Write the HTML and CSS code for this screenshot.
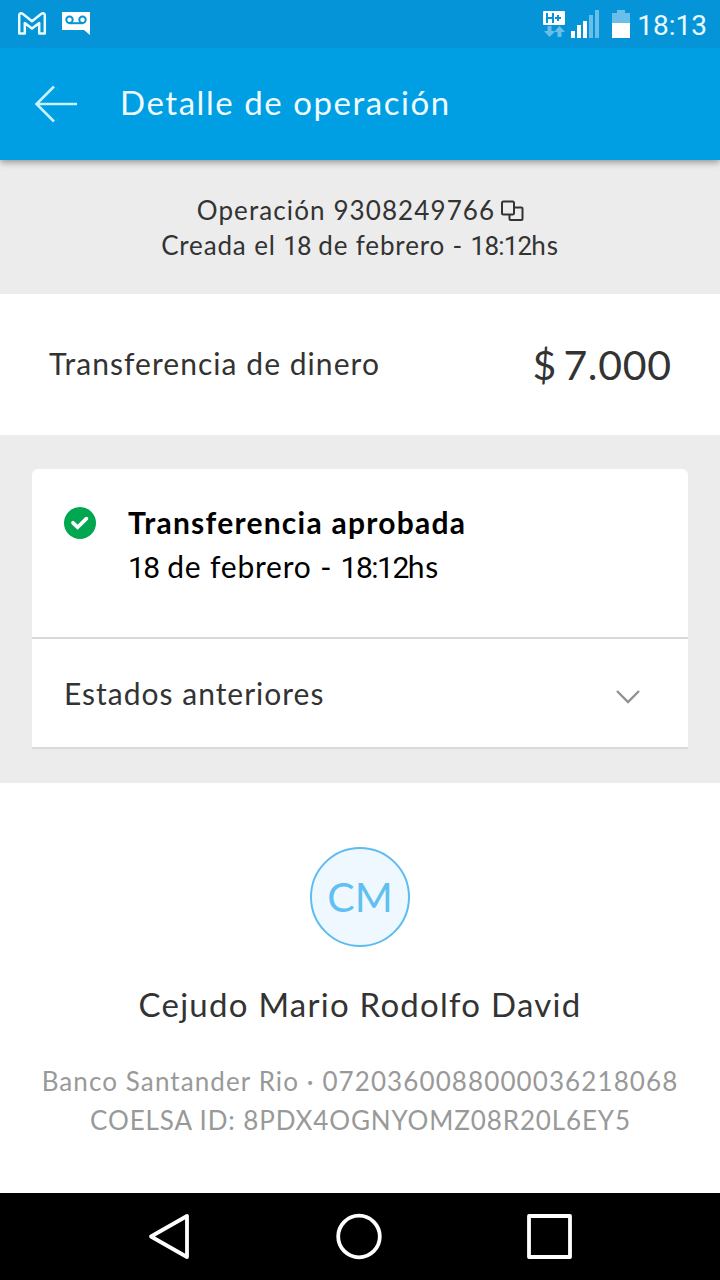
FILE: index.html
```html
<!DOCTYPE html>
<html lang="es">
<head>
<meta charset="utf-8">
<title>Detalle de operación</title>
<link rel="stylesheet" href="styles.css">
</head>
<body>
<div class="screen">
  <header class="top">
    <div class="status">
      <svg class="status-left" width="76" height="28" viewBox="0 0 76 28">
        <path d="M1.200 22.500V3.500Q2.300 1.200 4.600 2.800L14 10.200l9.400-7.400Q25.700 1.200 26.800 3.500V22.500H21.200V12L14 17.600 6.800 12v10.500z" fill="none" stroke="#e9fbff" stroke-width="2.500" stroke-linejoin="round"/>
        <path d="M44 1h28v23l-6-5H44z" fill="#fff"/>
        <g fill="none" stroke="#0594d7" stroke-width="2"><circle cx="51.500" cy="8.800" r="3.200"/><circle cx="64.500" cy="8.800" r="3.200"/><path d="M51 12.200h14"/></g>
      </svg>
      <div class="status-right">
        <svg width="92" height="32" viewBox="0 0 92 32">
          <rect x="0" y="3" width="22" height="14" rx="1" fill="#fff"/>
          <path d="M4 5v10M10 5v10M4 10h6M12 10h6M15 7v6" stroke="#0594d7" stroke-width="2" fill="none"/>
          <path d="M4.500 18h4v5h4L6.500 29 1 23h3.500zM14.500 29h4v-5H22l-5.500-6-5.500 6h3.500z" fill="#69beea"/>
          <path d="M28 23h4v7h-4zM34 17h4v13h-4zM40 13h4v17h-4z" fill="#fff"/>
          <path d="M46 7h4v23h-4zM52 2h4v28h-4z" fill="#69beea"/>
          <path d="M69 5h5V2h8v3h5v11H69z" fill="#69beea"/>
          <path d="M69 15h18v15H69z" fill="#fff"/>
        </svg>
        <span class="clock">18:13</span>
      </div>
    </div>
    <div class="appbar">
      <svg width="44" height="40" viewBox="0 0 44 40"><path d="M20 2.500L2.500 20 20 37.500M2.500 20H43" fill="none" stroke="#c4f3ff" stroke-width="2.600"/></svg>
      <h1 class="title">Detalle de operación</h1>
    </div>
  </header>
  <section class="summary">
    <div class="operation"><span class="op-number">Operación 9308249766</span>
      <svg width="24" height="22" viewBox="0 0 24 22"><g fill="none" stroke="#333" stroke-width="2"><rect x="2" y="1.500" width="12" height="13" rx="1.500"/><path d="M14 7.500h7.500q1 0 1 1V19q0 1-1 1h-11q-1 0-1-1v-4.500"/></g></svg>
    </div>
    <div class="created">Creada el <span class="num">18</span> de febrero - <span class="num">18:12</span>hs</div>
  </section>
  <section class="amount-row">
    <span class="concept">Transferencia de dinero</span>
    <span class="amount"><span>$</span><span class="value">7.000</span></span>
  </section>
  <section class="states">
    <div class="card">
      <div class="approved">
        <svg width="32" height="32" viewBox="0 0 32 32"><circle cx="16" cy="16" r="16" fill="#00a650"/><path d="M9 15.800l4.600 4.400 8.800-8.600" fill="none" stroke="#fff" stroke-width="3.700" stroke-linecap="round"/></svg>
        <div class="approved-text"><strong>Transferencia aprobada</strong><span class="date"><span class="num">18</span> de febrero - <span class="num">18:12</span>hs</span></div>
      </div>
      <div class="previous"><span>Estados anteriores</span>
        <svg width="24" height="16" viewBox="0 0 24 16"><path d="M1 2l11 11L23 2" fill="none" stroke="#919191" stroke-width="2.300"/></svg>
      </div>
    </div>
  </section>
  <section class="person">
    <div class="avatar">CM</div>
    <h2 class="name">Cejudo Mario Rodolfo David</h2>
    <div class="bank">Banco Santander Rio · 0720360088000036218068</div>
    <div class="coelsa">COELSA ID: 8PDX4OGNYOMZ08R20L6EY5</div>
  </section>
  <nav class="navbar">
    <svg width="48" height="48" viewBox="0 0 48 48"><path d="M4 24.500L40 4v41z" fill="none" stroke="#fff" stroke-width="3.800" stroke-linejoin="round"/></svg>
    <svg width="48" height="48" viewBox="0 0 48 48"><circle cx="23" cy="24.500" r="20.800" fill="none" stroke="#fff" stroke-width="3.800"/></svg>
    <svg width="48" height="48" viewBox="0 0 48 48"><rect x="4" y="4" width="41" height="41" fill="none" stroke="#fff" stroke-width="3.800" stroke-linejoin="round"/></svg>
  </nav>
</div>
</body>
</html>
```
FILE: styles.css
```css
* { box-sizing: border-box; }
body { margin: 0; background: #fff; }
svg { display: block; flex: none; }
.screen { width: 720px; height: 1280px; display: flex; flex-direction: column; overflow: hidden; font-family: Lato, "Open Sans", sans-serif; color: #333; white-space: nowrap; }
.num { font-family: Roboto, sans-serif; font-weight: 400; letter-spacing: -.8px; }
.top { height: 160px; flex: none; background: #009ee3; box-shadow: 0 2px 7px rgba(0,0,0,.4); position: relative; }
.status { height: 48px; background: #0594d7; display: flex; justify-content: space-between; align-items: flex-start; padding: 0 13px 0 18px; }
.status-left { margin-top: 11px; }
.status-right { display: flex; gap: 2px; padding-top: 8px; }
.clock { font: 400 28px/36px Roboto, sans-serif; color: #e9faff; }
.appbar { height: 112px; display: flex; align-items: center; gap: 42px; padding-left: 34px; }
.title { margin: 0; font-size: 33px; font-weight: 400; line-height: 40px; letter-spacing: 1.55px; color: #effbff; padding-bottom: 4px; }
.summary { height: 134px; flex: none; background: #ececec; padding-top: 33px; font-size: 26px; line-height: 35px; display: flex; flex-direction: column; align-items: center; }
.operation { display: flex; align-items: center; gap: 5px; padding-left: 1px; }
.op-number { letter-spacing: 1.1px; }
.created { letter-spacing: .85px; }
.amount-row { height: 141px; flex: none; display: flex; justify-content: space-between; align-items: center; padding: 0 49px; }
.concept { font-size: 30px; letter-spacing: 1.05px; padding-bottom: 3px; }
.amount { font-size: 41px; display: flex; gap: 7px; }
.amount .value { letter-spacing: .7px; margin-right: -.7px; }
.states { height: 348px; flex: none; background: #ececec; padding: 34px 32px 0; }
.card { background: #fff; border-radius: 6px 6px 0 0; height: 280px; border-bottom: 2px solid #d9d9d9; }
.approved { height: 170px; border-bottom: 2px solid #d9d9d9; padding: 32px 32px 0; display: flex; gap: 32px; color: #000; }
.approved > svg { margin-top: 6px; }
.approved-text { display: flex; flex-direction: column; font-size: 30px; line-height: 44px; margin-top: -1px; }
.approved-text strong { font-weight: 700; letter-spacing: 1.25px; }
.date { letter-spacing: .8px; }
.date .num { letter-spacing: -1.5px; }
.previous { height: 108px; display: flex; align-items: center; justify-content: space-between; padding: 0 48px 0 32px; font-size: 30px; letter-spacing: 1px; }
.previous svg { margin-top: 7px; }
.person { height: 410px; flex: none; display: flex; flex-direction: column; align-items: center; padding-top: 64px; }
.avatar { width: 100px; height: 100px; border-radius: 50%; border: 2px solid #5ebcee; background: #eff8ff; color: #5fc0f1; font-size: 41px; line-height: 96px; text-align: center; }
.name { margin: 37px 0 0; font-size: 33px; line-height: 40px; font-weight: 400; letter-spacing: 1.25px; }
.bank, .coelsa { font-size: 26px; line-height: 39px; color: #999; }
.bank { margin-top: 38px; letter-spacing: 1.1px; }
.coelsa { letter-spacing: .87px; padding-left: 1px; }
.navbar { height: 87px; flex: none; background: #000; display: flex; justify-content: space-between; align-items: center; padding: 0 147px 1px; }
```
